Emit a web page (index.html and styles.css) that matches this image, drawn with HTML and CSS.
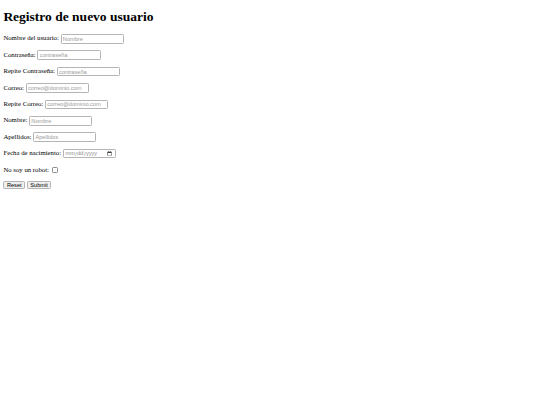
FILE: index.html
```html
<!DOCTYPE html>
<html lang="es">
<head>
<meta charset="utf-8">
<title>Registro de nuevo usuario</title>
<link rel="stylesheet" href="styles.css">
</head>
<body>
<h1 class="title">Registro de nuevo usuario</h1>
<form class="form">
<p class="row"><label>Nombre del usuario:</label> <input class="field" type="text" placeholder="Nombre"></p>
<p class="row"><label>Contraseña:</label> <input class="field" type="password" placeholder="contraseña"></p>
<p class="row"><label>Repite Contraseña:</label> <input class="field" type="password" placeholder="contraseña"></p>
<p class="row"><label>Correo:</label> <input class="field" type="email" placeholder="correo@dominio.com"></p>
<p class="row"><label>Repite Correo:</label> <input class="field" type="email" placeholder="correo@dominio.com"></p>
<p class="row"><label>Nombre:</label> <input class="field" type="text" placeholder="Nombre"></p>
<p class="row"><label>Apellidos:</label> <input class="field" type="text" placeholder="Apellidos"></p>
<p class="row"><label>Fecha de nacimiento:</label> <input class="field date" type="date"></p>
<p class="row"><label>No soy un robot:</label> <input class="check" type="checkbox"></p>
<p class="row"><input class="btn" type="reset" value="Reset"> <input class="btn" type="submit" value="Submit"></p>
</form>
</body>
</html>
```
FILE: styles.css
```css
html {
  zoom: 0.421875;
  background: #fff;
}
body {
  margin: 8px;
  font-family: "Liberation Serif", "Times New Roman", serif;
  font-size: 16px;
  color: #000;
}
.title {
  font-size: 32px;
  margin: 14px 0 19px;
}
.row {
  margin: 14.5px 0;
  line-height: 23px;
}
.field {
  box-sizing: border-box;
  width: 150px;
  height: 23px;
  padding: 1px 3px;
  border: 1px solid #b4b4b4;
  border-radius: 3px;
  background: #fff;
  font-family: "Liberation Sans", Arial, sans-serif;
  font-size: 13.33px;
  color: #000;
  vertical-align: middle;
}
.field::placeholder {
  color: #9a9a9a;
}
.date {
  width: 126px;
  color: #8a8a8a;
}
.check {
  appearance: none;
  box-sizing: border-box;
  width: 14px;
  height: 14px;
  margin: 0 3px;
  border: 1px solid #8a8a8a;
  border-radius: 3px;
  background: #fff;
  vertical-align: middle;
}
.btn {
  box-sizing: border-box;
  height: 19px;
  padding: 0 6px;
  border: 1px solid #b4b4b4;
  border-radius: 3px;
  background: #efefef;
  font-family: "Liberation Sans", Arial, sans-serif;
  font-size: 13.33px;
  color: #000;
}
```
